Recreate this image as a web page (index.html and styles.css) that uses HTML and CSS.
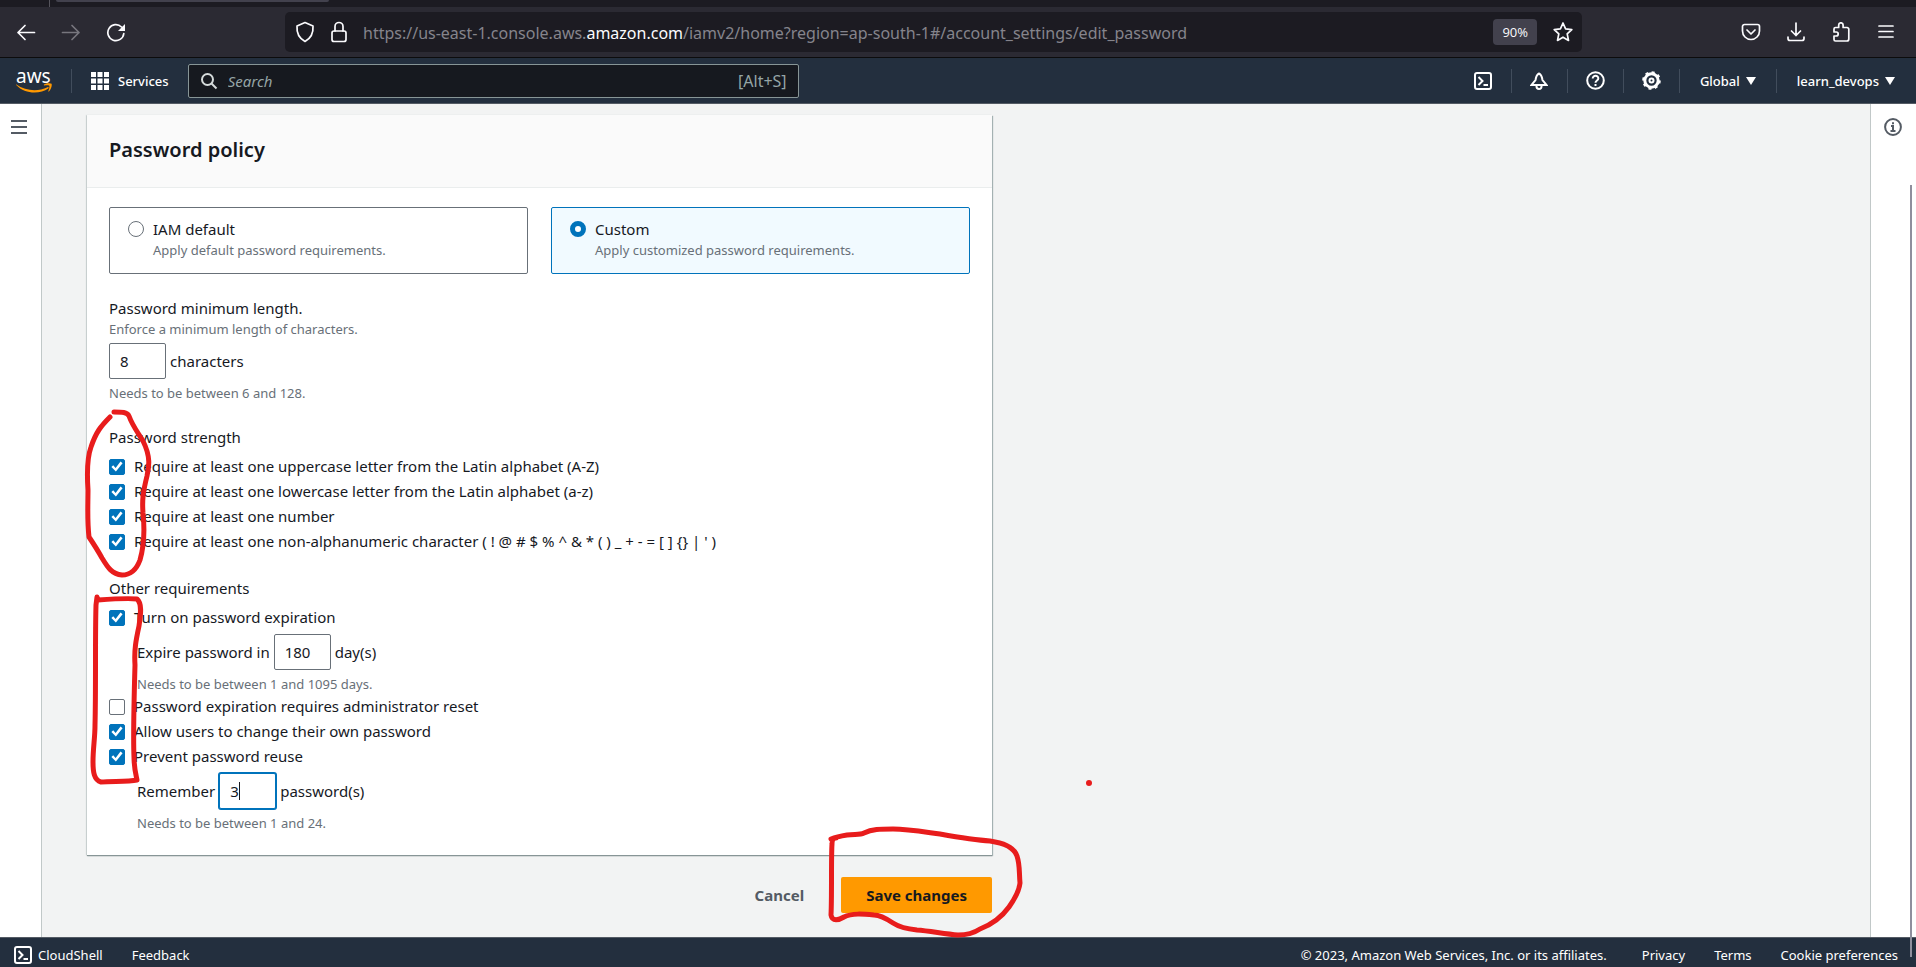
FILE: index.html
```html
<!DOCTYPE html>
<html lang="en">
<head>
<meta charset="utf-8">
<meta name="viewport" content="width=device-width, initial-scale=1">
<title>Edit password policy | IAM | Global</title>
<link rel="stylesheet" href="styles.css">
</head>
<body>
<div class="tabstrip"><span class="tab-divider"></span><span class="tab-active"></span></div>

<div class="toolbar">
  <div class="history">
    <button class="icon-btn" aria-label="Back"><svg width="20" height="20" viewBox="0 0 20 20"><path d="M18.500 10.500H2M9 3.500l-7 7 7 7"/></svg></button>
    <button class="icon-btn dim" aria-label="Forward"><svg width="20" height="20" viewBox="0 0 20 20"><path d="M1.500 10.500H18M11 3.500l7 7-7 7"/></svg></button>
    <button class="icon-btn" aria-label="Reload"><svg width="20" height="20" viewBox="0 0 20 20"><path d="M17.800 11.500A8 8 0 1 1 15.500 5"/><path class="solid" d="M19 2v7h-7z"/></svg></button>
  </div>
  <div class="urlbar">
    <button class="icon-btn" aria-label="Tracking protection"><svg width="20" height="22" viewBox="0 0 20 22"><path d="M10 1.500 18 5c.5 7-2.500 12.500-8 15.500C4.500 17.500 1.500 12 2 5z"/></svg></button>
    <button class="icon-btn" aria-label="Connection secure"><svg width="18" height="22" viewBox="0 0 18 22"><rect x="2" y="10" width="14" height="10.500" rx="2"/><path d="M5 10V5.500a4 4 0 0 1 8 0V10"/></svg></button>
    <span class="url">https://us-east-1.console.aws.<b>amazon.com</b>/iamv2/home?region=ap-south-1#/account_settings/edit_password</span>
    <button class="zoom-level">90%</button>
    <button class="icon-btn" aria-label="Bookmark"><svg width="22" height="22" viewBox="0 0 22 22"><path d="M11 2l2.600 5.900 6.200.7-4.600 4.300 1.300 6.500L11 16.200l-5.500 3.200 1.300-6.500-4.600-4.300 6.200-.7z"/></svg></button>
  </div>
  <div class="tools">
    <button class="icon-btn" aria-label="Pocket"><svg width="20" height="20" viewBox="0 0 20 20"><path d="M3.500 2.500h13a2 2 0 0 1 2 2v4.500a8.500 8.500 0 0 1-17 0V4.500a2 2 0 0 1 2-2zM6 8l4 4 4-4"/></svg></button>
    <button class="icon-btn" aria-label="Downloads"><svg width="20" height="20" viewBox="0 0 20 20"><path d="M10 1v12.500M5.500 9l4.500 4.500L14.500 9M2 15v1.500a2 2 0 0 0 2 2h12a2 2 0 0 0 2-2V15"/></svg></button>
    <button class="icon-btn" aria-label="Extensions"><svg width="20" height="20" viewBox="0 0 20 20"><path d="M4.500 5.500h3.200V3a2.200 2.200 0 0 1 4.400 0v2.500H16a1.800 1.800 0 0 1 1.800 1.800V17a2 2 0 0 1-2 2H4.500A1.500 1.500 0 0 1 3 17.500V14h2.200a2 2 0 0 0 0-4H3V7a1.500 1.500 0 0 1 1.500-1.500z"/></svg></button>
    <button class="icon-btn" aria-label="Menu"><svg width="20" height="20" viewBox="0 0 20 20"><path d="M3 4h14M3 9.500h14M3 15h14"/></svg></button>
  </div>
</div>

<header class="console-nav">
  <a class="logo" href="#" aria-label="AWS home"><span>aws</span><svg width="36" height="10" viewBox="0 0 36 10"><path class="smile" d="M0 1.200C10 8.200 22 8.800 31.500 4.200c1-.4 1.700.6.800 1.300C24 11.300 9 11.400.2 2 0 1.600-.2 1 0 1.200zM28 1.400c2-1.500 6.500-1.600 7.500-.6.800 1-.3 5.600-2.600 7.600-.4.300-.8.100-.6-.3.700-1.700 1.500-4.400 1-5.300-.5-.8-3.300-.6-5-.4-.5 0-.7-.6-.3-1z"/></svg></a>
  <button class="services"><svg width="18" height="18" viewBox="0 0 18 18"><path class="solid" d="M0 0h5v5H0zM6.500 0h5v5h-5zM13 0h5v5h-5zM0 6.500h5v5H0zM6.500 6.500h5v5h-5zM13 6.500h5v5h-5zM0 13h5v5H0zM6.500 13h5v5h-5zM13 13h5v5h-5z"/></svg>Services</button>
  <label class="search">
    <svg width="18" height="18" viewBox="0 0 18 18"><circle cx="7.500" cy="7.500" r="5.500"/><path d="M11.500 11.500l5 5"/></svg>
    <input type="search" placeholder="Search" aria-label="Search">
    <span class="shortcut">[Alt+S]</span>
  </label>
  <nav class="utilities">
    <button aria-label="CloudShell"><svg width="18" height="18" viewBox="0 0 18 18"><rect x="1" y="1" width="16" height="16" rx="2"/><path d="M4.500 5l4 4-4 4M9.500 13H14"/></svg></button>
    <button aria-label="Notifications"><svg width="18" height="18" viewBox="0 0 18 18"><path d="M9 1.500C6.500 2.500 6 5 5.500 8L1.500 13h15L12.500 8C12 5 11.500 2.500 9 1.500zM6.500 13.500V14.500a2.500 2.500 0 0 0 5 0v-1"/></svg></button>
    <button aria-label="Help"><svg width="19" height="19" viewBox="0 0 19 19"><circle cx="9.500" cy="9.500" r="8.300"/><path d="M6.700 7.500c0-3.800 5.800-3.500 5.600 0 0 2-2.800 2-2.800 4.200"/><path d="M9.500 13v2"/></svg></button>
    <button aria-label="Settings"><svg width="19" height="19" viewBox="0 0 19 19"><circle class="ring" cx="9.500" cy="9.500" r="6.700"/><circle class="teeth" cx="9.500" cy="9.500" r="8.300"/><circle cx="9.500" cy="9.500" r="2"/></svg></button>
    <button class="menu">Global <span class="caret"></span></button>
    <button class="menu account">learn_devops <span class="caret"></span></button>
  </nav>
</header>

<div class="workspace">
  <aside class="rail rail-left"><button aria-label="Open navigation"><svg width="16" height="14" viewBox="0 0 16 14"><path d="M0 1h16M0 7h16M0 13h16"/></svg></button></aside>
  <main class="content">
    <form class="policy-form">
      <section class="card">
        <h2 class="card-title">Password policy</h2>
        <div class="card-body">
          <div class="tiles">
            <label class="tile"><input type="radio" name="policy"><span>IAM default<small>Apply default password requirements.</small></span></label>
            <label class="tile selected"><input type="radio" name="policy" checked><span>Custom<small>Apply customized password requirements.</small></span></label>
          </div>
          <div class="group">
            <label class="group-label" for="min-length">Password minimum length.</label>
            <p class="hint">Enforce a minimum length of characters.</p>
            <div class="inline-field"><input id="min-length" type="text" inputmode="numeric" value="8"><span>characters</span></div>
            <p class="hint">Needs to be between 6 and 128.</p>
          </div>
          <fieldset class="group">
            <legend class="group-label">Password strength</legend>
            <div class="checks">
              <label class="check"><input type="checkbox" checked>Require at least one uppercase letter from the Latin alphabet (A-Z)</label>
              <label class="check"><input type="checkbox" checked>Require at least one lowercase letter from the Latin alphabet (a-z)</label>
              <label class="check"><input type="checkbox" checked>Require at least one number</label>
              <label class="check"><input type="checkbox" checked>Require at least one non-alphanumeric character ( ! @ # $ % ^ &amp; * ( ) _ + - = [ ] {} | ' )</label>
            </div>
          </fieldset>
          <fieldset class="group">
            <legend class="group-label">Other requirements</legend>
            <div class="checks">
              <label class="check"><input type="checkbox" checked>Turn on password expiration</label>
              <div class="nested">
                <div class="inline-field"><label for="expire">Expire password in</label><input id="expire" type="text" inputmode="numeric" value="180"><span>day(s)</span></div>
                <p class="hint">Needs to be between 1 and 1095 days.</p>
              </div>
              <label class="check"><input type="checkbox">Password expiration requires administrator reset</label>
              <label class="check"><input type="checkbox" checked>Allow users to change their own password</label>
              <label class="check"><input type="checkbox" checked>Prevent password reuse</label>
              <div class="nested">
                <div class="inline-field"><label for="remember">Remember</label><span class="editing"><input id="remember" type="text" inputmode="numeric" value="3"></span><span>password(s)</span></div>
                <p class="hint">Needs to be between 1 and 24.</p>
              </div>
            </div>
          </fieldset>
        </div>
      </section>
      <div class="actions">
        <button type="button" class="btn-link">Cancel</button>
        <button type="submit" class="btn-primary">Save changes</button>
      </div>
    </form>
  </main>
  <aside class="rail rail-right"><button aria-label="Open help panel"><svg width="18" height="18" viewBox="0 0 18 18"><circle cx="9" cy="9" r="7.900"/><path d="M9 4.200v2M7 8h2v5M6.500 13h5"/></svg></button></aside>
</div>

<footer class="console-footer">
  <button class="shell"><svg width="18" height="18" viewBox="0 0 18 18"><rect x="1" y="1" width="16" height="16" rx="2"/><path d="M4.500 5l4 4-4 4M9.500 13H14"/></svg>CloudShell</button>
  <a href="#">Feedback</a>
  <span class="copyright">© 2023, Amazon Web Services, Inc. or its affiliates.</span>
  <a href="#">Privacy</a>
  <a href="#">Terms</a>
  <a href="#">Cookie preferences</a>
</footer>

<div class="scroll-thumb"></div>

<svg class="ink" width="1100" height="960" viewBox="0 0 1100 960" aria-hidden="true">
  <path d="M114 412C122 412 127 412 129 416C133 427 139 434 143 441C151 457 149 467 147 476C143 492 142 500 143 513C145 532 144 546 140 560C136 571 130 575 122 575C112 574 108 568 102 558C97 549 93 543 89 537C87 520 88 505 88 490C87 475 87 458 91 447C96 432 101 426 110 417"/>
  <path d="M97 597L98 600C112 599 128 598 137 599C143 604 140 618 139 626C136 640 134 650 135 665C134 700 133 735 134 757C134 768 136 775 137 780C128 782 112 781 101 782C94 780 93 772 93 762C93 748 95 738 95 725C96 685 95 640 96 605Z"/>
  <path d="M831 839C836 837 841 836 847 835C855 834 860 835 864 833C872 829 880 829 893 829C908 829 925 832 940 834C957 837 975 840 990 841C1004 843 1014 847 1017 856C1020 865 1019 872 1020 883C1019 892 1014 900 1009 907C1001 918 993 924 980 929C974 933 968 935 958 935C945 934 930 931 917 930C907 929 899 927 893 923C887 919 880 915 874 915C863 914 852 913 844 917C839 920 832 922 831 915C832 895 831 860 832 844C832 840 833 838 836 838"/>
  <circle cx="1089" cy="783" r="3"/>
</svg>
</body>
</html>
```

FILE: styles.css
```css
* { box-sizing: border-box; }

body {
  margin: 0;
  min-height: 100vh;
  display: flex;
  flex-direction: column;
  position: relative;
  background: #f2f3f3;
  color: #16191f;
  font: 15px/22px "Noto Sans", "Open Sans", sans-serif;
}

button {
  margin: 0;
  padding: 0;
  border: 0;
  background: none;
  color: inherit;
  font: inherit;
  display: flex;
  align-items: center;
}

button, a { white-space: nowrap; }
a { color: inherit; text-decoration: none; }
p { margin: 0; }

svg {
  display: block;
  flex: none;
  fill: none;
  stroke: currentColor;
  stroke-width: 2;
}

svg .solid { fill: currentColor; stroke: none; }

/* Browser chrome */
.tabstrip {
  height: 7px;
  display: flex;
  gap: 6px;
  padding-left: 49px;
  background: #1c1b22;
}

.tab-divider { width: 1px; background: #55545c; }

.tab-active {
  width: 273px;
  height: 2px;
  border-radius: 0 0 4px 4px;
  background: #42414d;
}

.toolbar {
  display: flex;
  align-items: center;
  height: 51px;
  padding: 0 20px 0 16px;
  border-bottom: 1px solid #0c0c0d;
  background: #2b2a33;
  color: #fbfbfe;
}

.toolbar svg { stroke-width: 1.7; stroke-linejoin: round; stroke-linecap: round; }
.history { display: flex; gap: 25px; width: 269px; flex: none; }
.dim { color: #77767e; }

.urlbar {
  flex: 1;
  min-width: 0;
  height: 40px;
  display: flex;
  align-items: center;
  gap: 15px;
  padding: 0 8px 0 10px;
  border-radius: 5px;
  background: #1c1b22;
}

.url {
  flex: 1;
  min-width: 0;
  overflow: hidden;
  white-space: nowrap;
  padding-top: 2px;
  color: #85848c;
  font-size: 16px;
}

.url b { color: #fbfbfe; font-weight: 400; }

.zoom-level {
  height: 26px;
  padding: 0 9px;
  border-radius: 4px;
  background: #42414d;
  font-family: "Open Sans", sans-serif;
  font-size: 13px;
}

.tools { display: flex; gap: 25px; padding-left: 159px; }

/* Console navigation */
.console-nav {
  display: flex;
  align-items: center;
  height: 46px;
  padding: 0 21px 0 16px;
  border-bottom: 1px solid #545b64;
  background: #232f3e;
  color: #fff;
  font-size: 13px;
}

.logo {
  width: 56px;
  height: 24px;
  border-right: 1px solid #414d5c;
  font-size: 19px;
  line-height: 14px;
}

.logo span { display: block; }
.smile { fill: #f90; stroke: none; }
.services { gap: 9px; margin: 0 19px; font-weight: 500; }

.search {
  flex: 0 1 611px;
  display: flex;
  align-items: center;
  gap: 10px;
  height: 34px;
  padding: 0 11px;
  border: 1px solid #879596;
  border-radius: 2px;
  background: #16191f;
  color: #95a5a6;
  font-size: 15px;
}

.search svg { color: #d5dbdb; }
.shortcut { font-size: 16px; }

.search input {
  flex: 1;
  min-width: 0;
  padding: 0;
  border: 0;
  outline: 0;
  background: none;
  color: inherit;
  font: inherit;
}

.search input::placeholder { color: #95a5a6; font-style: italic; }

.utilities { display: flex; margin-left: auto; }

.utilities button {
  justify-content: center;
  width: 56px;
  height: 24px;
  border-right: 1px solid #414d5c;
  font-weight: 500;
}

.utilities .menu { gap: 6px; width: 97px; }
.utilities .account { width: auto; padding-left: 20px; border: 0; }
.ring { stroke-width: 3; }
.teeth { stroke-dasharray: 3 3.500; }

.caret {
  border: 5px solid transparent;
  border-top: 8px solid;
  border-bottom: 0;
}

/* Work area */
.workspace { flex: 1; display: flex; }

.rail {
  flex: none;
  padding-top: 16px;
  background: #fff;
  color: #545b64;
}

.rail-left {
  width: 42px;
  padding-left: 11px;
  border-right: 1px solid #c1c8c8;
}

.rail-right {
  width: 46px;
  padding: 14px 0 0 13px;
  border-left: 1px solid #c1c8c8;
}

.content { flex: 1; min-width: 0; padding: 11px 45px 20px; }
.policy-form { max-width: 905px; }

.card {
  background: #fff;
  box-shadow: 0 1px 1px #879596, 1px 1px 1px #aab7b8, -1px 0 1px #d5dbdb;
}

.card-title {
  margin: 0;
  padding: 23px 22px 25px;
  border-bottom: 1px solid #eaeded;
  background: #fafafa;
  font-size: 20px;
  font-weight: 600;
  line-height: 24px;
}

.card-body {
  display: grid;
  gap: 23px;
  padding: 19px 22px 22px;
}

.tiles {
  display: grid;
  grid-template-columns: 1fr 1fr;
  gap: 23px;
}

.tile {
  display: flex;
  gap: 9px;
  min-height: 67px;
  padding: 10px 18px;
  border: 1px solid #687078;
  border-radius: 2px;
}

.tile.selected { border-color: #0073bb; background: #f1faff; }

small, .hint {
  display: block;
  color: #687078;
  font-size: 13px;
  line-height: 20px;
}

.tile input {
  appearance: none;
  flex: none;
  width: 16px;
  height: 16px;
  margin: 3px 0 0;
  border: 1px solid #687078;
  border-radius: 50%;
  background: #fff;
}

.tile input:checked { border: 5px solid #0073bb; }

.group { min-width: 0; margin: 0; padding: 0; border: 0; }

.group-label { display: block; padding: 0; }

.inline-field {
  display: flex;
  align-items: center;
  gap: 4px;
  margin: 4px 0;
}

.inline-field input {
  display: block;
  width: 57px;
  height: 36px;
  padding: 0 10px;
  border: 1px solid #687078;
  border-radius: 2px;
  background: #fff;
  color: inherit;
  font: inherit;
}

.editing { position: relative; }

.editing input { border-color: #0073bb; box-shadow: 0 0 0 1px #0073bb; outline: 0; }

/* Text cursor of the field being edited */
.editing::after {
  content: "";
  position: absolute;
  top: 9px;
  left: 20px;
  width: 1px;
  height: 18px;
  background: #16191f;
}

.checks { padding-top: 6px; }

.check {
  display: flex;
  align-items: center;
  gap: 9px;
  line-height: 25px;
}

.check input {
  appearance: none;
  flex: none;
  width: 16px;
  height: 16px;
  margin: 0;
  border: 1px solid #687078;
  border-radius: 2px;
  background: #fff;
}

.check input:checked { border-color: #0073bb; background: #0073bb; }

.check input:checked::before {
  content: "";
  display: block;
  height: 14px;
  background: #fff;
  clip-path: polygon(10% 53%, 23% 41%, 40% 60%, 75% 14%, 90% 26%, 42% 86%);
}

.nested { padding-left: 28px; }

.actions {
  display: flex;
  justify-content: flex-end;
  gap: 37px;
  padding-top: 22px;
  font-weight: 700;
}

.btn-link { color: #545b64; }

.btn-primary {
  height: 36px;
  padding: 0 25px;
  border-radius: 2px;
  background: #f90;
}

/* Footer */
.console-footer {
  display: flex;
  align-items: center;
  gap: 29px;
  height: 30px;
  padding: 4px 18px 0 14px;
  border-top: 1px solid #545b64;
  background: #232f3e;
  color: #fff;
  font-size: 13px;
}

.shell { gap: 6px; }
.copyright { margin-left: auto; padding-right: 6px; }

.scroll-thumb {
  position: absolute;
  top: 185px;
  right: 4px;
  bottom: 10px;
  width: 2px;
  background: #8f8f9d;
}

/* Marker strokes over the form */
.ink {
  position: absolute;
  top: 0;
  left: 0;
  color: #e81c1c;
  stroke-width: 5;
  stroke-linecap: round;
  stroke-linejoin: round;
  pointer-events: none;
}

.ink circle { fill: currentColor; stroke: none; }
```
